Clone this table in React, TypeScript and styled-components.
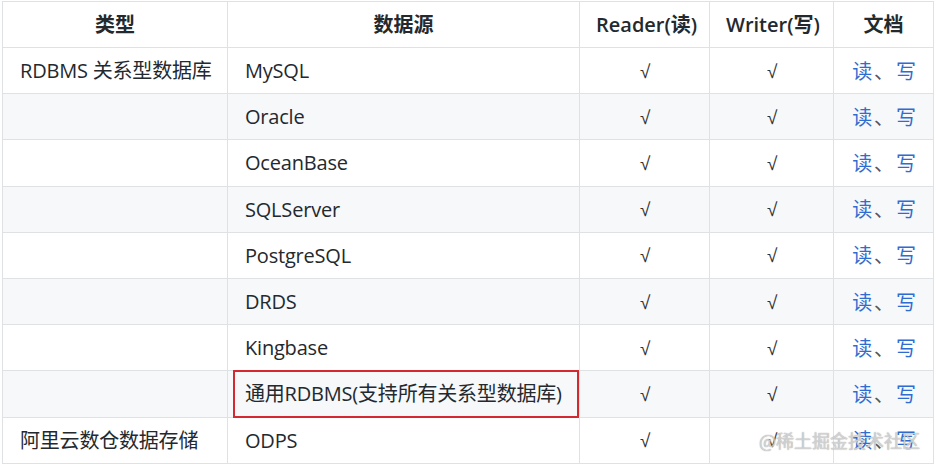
import React from 'react';
import styled, { createGlobalStyle } from 'styled-components';

const GlobalStyle = createGlobalStyle`
  html, body {
    margin: 0;
    padding: 0;
    background: #ffffff;
  }
  body {
    font-family: "Open Sans", "Noto Sans CJK SC", sans-serif;
    color: #24292e;
  }
`;

const Page = styled.div`
  position: relative;
  width: 937px;
  height: 464px;
  overflow: hidden;
  padding: 1px 0 0 2px;
  box-sizing: border-box;
`;

const Table = styled.table`
  width: 931px;
  table-layout: fixed;
  border-collapse: collapse;
  border-spacing: 0;
  font-size: 20px;
  line-height: 30px;
`;

const HeadCell = styled.th`
  border: 1px solid #dfe2e5;
  height: 46px;
  padding: 0 16px;
  box-sizing: border-box;
  font-weight: 600;
  text-align: center;
  vertical-align: middle;
  white-space: nowrap;
  color: #24292e;
`;

const Row = styled.tr<{ $striped: boolean }>`
  background: ${({ $striped }) => ($striped ? '#f6f8fa' : '#ffffff')};
`;

const Cell = styled.td<{ $align?: 'left' | 'center' }>`
  position: relative;
  border: 1px solid #dfe2e5;
  height: 46.2px;
  padding: 1px 16px 0 17px;
  box-sizing: border-box;
  text-align: ${({ $align }) => $align || 'left'};
  vertical-align: middle;
  white-space: nowrap;
  letter-spacing: -0.2px;
  color: #24292e;
`;

const Check = styled.span`
  font-family: "Liberation Sans", sans-serif;
  font-size: 19px;
  color: #333;
`;

const DocLink = styled.a`
  color: #2f6cd1;
  text-decoration: none;
  font-family: "Noto Sans CJK SC", sans-serif;
`;

const Sep = styled.span`
  color: #555;
  font-family: "Noto Sans CJK SC", sans-serif;
  margin: 0 2px;
`;

const Highlight = styled.div`
  position: absolute;
  left: 5px;
  top: -1px;
  right: 0;
  bottom: -1px;
  border: 2px solid #d22a30;
  pointer-events: none;
`;

const Watermark = styled.div`
  position: absolute;
  right: 17px;
  bottom: 12px;
  font-family: "Noto Sans CJK SC", sans-serif;
  font-size: 18px;
  line-height: 24px;
  color: rgba(225, 225, 225, 0.8);
  text-shadow: 0 0 1px rgba(110, 110, 110, 0.8);
  pointer-events: none;
`;

type Source = { type: string; name: string; marked?: boolean };

const sources: Source[] = [
  { type: 'RDBMS 关系型数据库', name: 'MySQL' },
  { type: '', name: 'Oracle' },
  { type: '', name: 'OceanBase' },
  { type: '', name: 'SQLServer' },
  { type: '', name: 'PostgreSQL' },
  { type: '', name: 'DRDS' },
  { type: '', name: 'Kingbase' },
  { type: '', name: '通用RDBMS(支持所有关系型数据库)', marked: true },
  { type: '阿里云数仓数据存储', name: 'ODPS' },
];

export default function App() {
  return (
    <Page>
      <GlobalStyle />
      <Table>
        <colgroup>
          <col style={{ width: 225 }} />
          <col style={{ width: 352 }} />
          <col style={{ width: 130 }} />
          <col style={{ width: 124 }} />
          <col style={{ width: 100 }} />
        </colgroup>
        <thead>
          <tr>
            <HeadCell>类型</HeadCell>
            <HeadCell>数据源</HeadCell>
            <HeadCell>Reader(读)</HeadCell>
            <HeadCell>Writer(写)</HeadCell>
            <HeadCell>文档</HeadCell>
          </tr>
        </thead>
        <tbody>
          {sources.map((s, i) => (
            <Row key={s.name} $striped={i % 2 === 1}>
              <Cell>{s.type}</Cell>
              <Cell>
                {s.name}
                {s.marked && <Highlight />}
              </Cell>
              <Cell $align="center">
                <Check>√</Check>
              </Cell>
              <Cell $align="center">
                <Check>√</Check>
              </Cell>
              <Cell $align="center">
                <DocLink href="#">读</DocLink>
                <Sep>、</Sep>
                <DocLink href="#">写</DocLink>
              </Cell>
            </Row>
          ))}
        </tbody>
      </Table>
      <Watermark>@稀土掘金技术社区</Watermark>
    </Page>
  );
}
